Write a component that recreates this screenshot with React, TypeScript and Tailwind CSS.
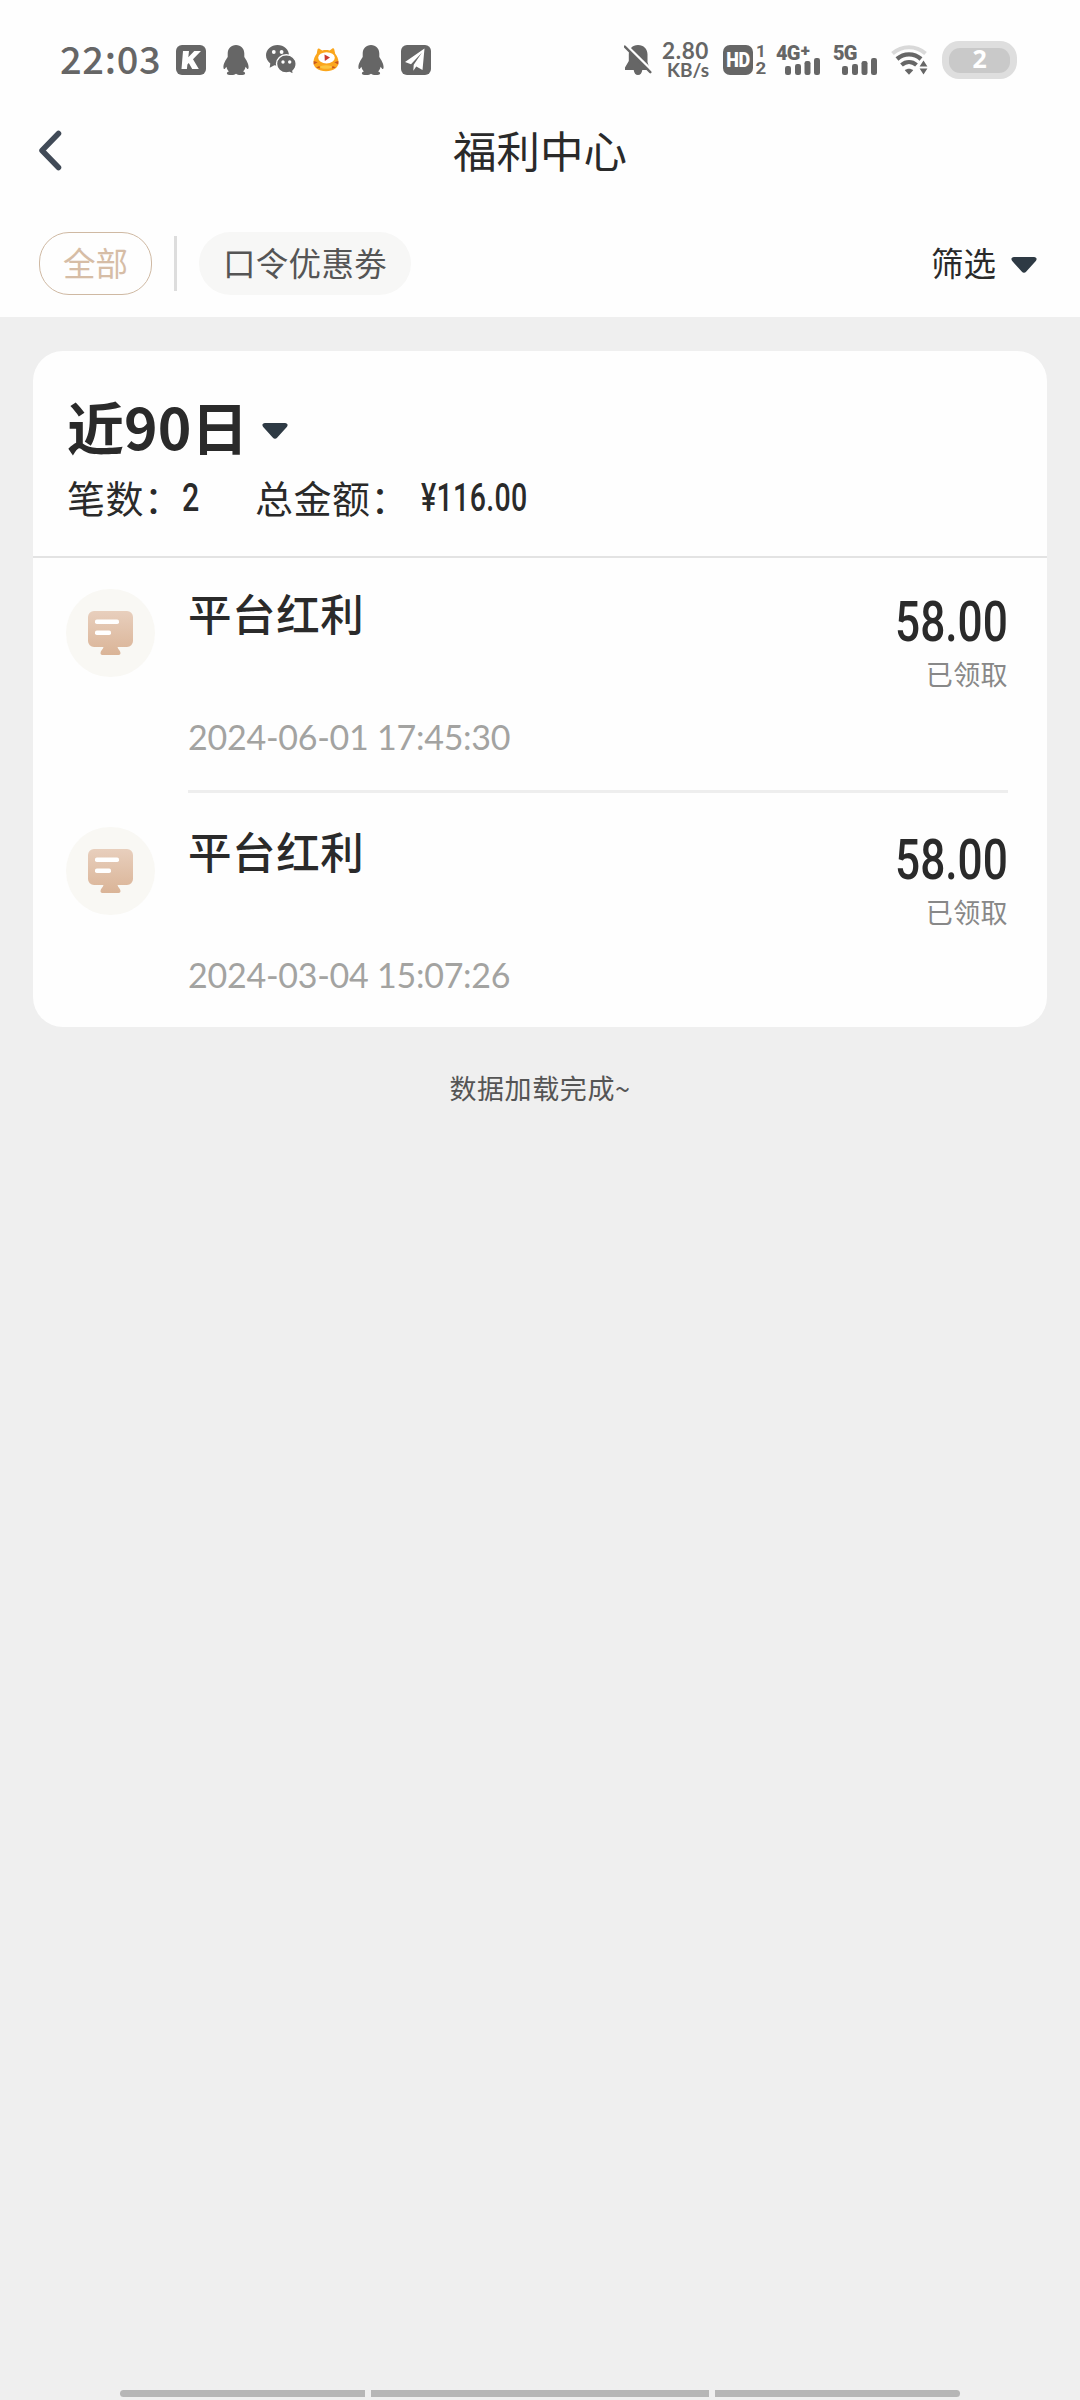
import type { ReactNode } from "react";

const cjk = "font-['Noto_Sans_CJK_SC',sans-serif]";

interface RecordItem {
  id: number;
  title: string;
  time: string;
  amount: string;
  status: string;
}

const records: RecordItem[] = [
  { id: 1, title: "平台红利", time: "2024-06-01 17:45:30", amount: "58.00", status: "已领取" },
  { id: 2, title: "平台红利", time: "2024-03-04 15:07:26", amount: "58.00", status: "已领取" },
];

function Penguin() {
  return (
    <svg width="26" height="30" viewBox="0 0 26 30" fill="#666">
      <path d="M13 0C8 0 4.700 3.600 4.700 8.500v3.500C3 14.500.4 18.500.4 22c0 1.800.7 2.600 1.500 1.700l1.500-2c.5 2 1.300 3.600 2.500 4.900-1.300.4-2 1-2 1.800 0 1.200 2 1.600 4.600 1.600 2 0 3.500-.4 4.500-1.200 1 .8 2.500 1.200 4.500 1.200 2.600 0 4.600-.4 4.600-1.600 0-.8-.7-1.400-2-1.800 1.200-1.300 2-2.900 2.500-4.900l1.500 2c.8.9 1.500.1 1.500-1.700 0-3.500-2.600-7.500-4.300-10V8.500C21.300 3.600 18 0 13 0z" />
    </svg>
  );
}

function WeChat() {
  return (
    <svg width="31" height="31" viewBox="0 0 31 31">
      <path d="M11.500 0C5.200 0 0 4.500 0 10.300c0 3.300 1.700 6.200 4.300 8.100l-.6 4.400 4.700-2.500c1 .3 2 .4 3.100.4C17.900 20.700 23 16.100 23 10.300S17.900 0 11.500 0z" fill="#666" />
      <circle cx="7.800" cy="7" r="1.900" fill="#fff" />
      <circle cx="15.600" cy="7" r="1.900" fill="#fff" />
      <path d="M20.300 9.800c-5.500 0-9.800 4-9.800 9s4.300 9.200 9.800 9.200c1.200 0 2.300-.2 3.400-.5l3.800 2.200-.6-3.700c2.100-1.700 3.300-4.300 3.300-7.200 0-5-4.400-9-9.900-9z" fill="#666" stroke="#fff" strokeWidth="1.400" />
      <circle cx="17" cy="17" r="1.700" fill="#fff" />
      <circle cx="23.700" cy="17" r="1.700" fill="#fff" />
    </svg>
  );
}

function CatPlayer() {
  return (
    <svg width="26" height="24" viewBox="0 0 26 24">
      <path d="M4.500 1.500c.4-1.200 1.200-1.400 2.300-.6l2.400 1.500c2.300-.6 5.100-.6 7.500 0L19 .8c1.200-.8 2-.5 2.300.6l.9 4.300c1.800 2 3.300 4.900 3.300 8.600 0 5.700-5 8.900-12.500 8.900S.5 20 .5 14.300C.5 10.500 2 7.700 3.700 5.700z" fill="#fba61c" />
      <path d="M.7 13l4 1.200-4 2.300zM25.300 13l-4 1.200 4 2.300zM3 19.500l3.500-1.500.5 2.500zM23 19.500L19.500 18l-.5 2.500z" fill="#c8561b" />
      <ellipse cx="13.500" cy="9.800" rx="8.300" ry="5.600" fill="#fff" />
      <ellipse cx="13" cy="19" rx="6" ry="1.800" fill="#fdc53f" />
      <path d="M11.500 6.500l5.500 3-5.200 3.600z" fill="#cb3a31" />
    </svg>
  );
}

function BellOff() {
  return (
    <svg width="28" height="31" viewBox="0 0 28 31">
      <path d="M14 0C8.300 0 4.800 4 4.800 9.500v6.500L1 22.500V25h8.700c.4 3 1.900 5 4.300 5s3.900-2 4.300-5H25v-3l-1.500-5V9.500C23.500 4 19.700 0 14 0z" fill="#666" />
      <path d="M2 0l26 25.500" stroke="#fff" strokeWidth="2.600" />
      <path d="M.8 1.600l25.500 25.600" stroke="#666" strokeWidth="2.400" strokeLinecap="round" />
    </svg>
  );
}

function SignalBars() {
  return (
    <svg width="36" height="17" viewBox="0 0 36 17" fill="#666">
      <rect x="0" y="8" width="6" height="9" rx="2.200" />
      <rect x="10" y="6" width="6" height="11" rx="2.200" />
      <rect x="19.500" y="3" width="6" height="14" rx="2.200" />
      <rect x="29" y="0" width="6" height="17" rx="2.200" />
    </svg>
  );
}

function Signal({ label, plus }: { label: string; plus?: boolean }) {
  return (
    <div className="relative h-[30px] w-[45px]">
      <span className="absolute top-0 left-0 flex font-['Roboto',sans-serif] text-[20px] leading-[16px] font-black tracking-[-0.8px]">
        {label}
        {plus && <span className="-mt-[3px] ml-[1px] text-[17px]">+</span>}
      </span>
      <div className="absolute bottom-0 left-[9px]">
        <SignalBars />
      </div>
    </div>
  );
}

function Wifi() {
  return (
    <svg width="37" height="30" viewBox="0 0 37 30" fill="none">
      <path d="M1.500 8.500c9.500-8.500 23.500-8.500 33 0" stroke="#d9d9d9" strokeWidth="4" />
      <path d="M6 14c7-6.200 17-6.200 24 0" stroke="#666" strokeWidth="4.400" />
      <path d="M10.500 20c4.500-3.800 10.500-3.800 15 0" stroke="#666" strokeWidth="4.200" />
      <path d="M13.800 25.200c2.500-2 5.900-2 8.400 0L18 29.800z" fill="#666" />
      <path d="M32.500 15.500l3.900 6h-7.800zM32.500 29.500l3.900-6h-7.800z" fill="#666" />
    </svg>
  );
}

function StatusBar() {
  return (
    <div className="flex h-[119px] items-start justify-between pt-[41px] pr-[63px] pl-[60px] text-[#666]">
      <div className="flex h-[38px] items-center">
        <span className="-mt-[5px] w-[116px] font-['Noto_Sans_CJK_SC',sans-serif] text-[38px] leading-[38px] font-medium tracking-[0.7px]">
          22:03
        </span>
        <svg width="30" height="30" viewBox="0 0 30 30">
          <rect width="30" height="30" rx="6" fill="#666" />
          <path d="M7 6h6l-.7 6.300L18.300 6H25l-8 8.300L22.800 24h-6.600l-3.400-6-1.400 1.500-.5 4.500H5.500z" fill="#fff" />
        </svg>
        <div className="ml-[17px]"><Penguin /></div>
        <div className="ml-[17px]"><WeChat /></div>
        <div className="ml-[16px]"><CatPlayer /></div>
        <div className="ml-[19px]"><Penguin /></div>
        <svg className="ml-[17px]" width="30" height="30" viewBox="0 0 30 30">
          <rect width="30" height="30" rx="6" fill="#666" />
          <path d="M23.500 3.500L4 17l6 2.200L21 7.500l-8.300 12.200-.4 6 3-4.200 6.200 3.500z" fill="#fff" />
        </svg>
      </div>

      <div className="flex h-[38px] items-center">
        <BellOff />
        <div className="mr-[1px] ml-[9px] flex w-[48px] flex-col items-end font-['Lato',sans-serif] font-bold">
          <span className="text-[22.500px] leading-[20px] tracking-[0.6px]">2.80</span>
          <span className="text-[19px] leading-[18px]">KB/s</span>
        </div>
        <div className="ml-[13px] flex h-[30px] w-[30px] items-center justify-center rounded-[7px] bg-[#666] text-white">
          <span className="scale-y-[1.1] font-['Roboto',sans-serif] text-[18px] leading-none font-black tracking-[-0.5px]">HD</span>
        </div>
        <div className="ml-[2px] flex w-[12px] flex-col items-center font-['Roboto',sans-serif] text-[17px] leading-[17px] font-bold">
          <span>1</span>
          <span className="scale-x-110">2</span>
        </div>
        <div className="ml-[9px]"><Signal label="4G" plus /></div>
        <div className="ml-[12px]"><Signal label="5G" /></div>
        <div className="ml-[13px]"><Wifi /></div>
        <div className="ml-[14px] flex h-[38px] w-[75px] items-center justify-center rounded-[17px] bg-[#dedede]">
          <div className="flex h-[25px] w-[61px] items-center justify-center rounded-[11px] bg-[#c9c9c9] pl-[17px] font-['Noto_Sans',sans-serif] text-[25px] leading-none font-bold text-white">
            <span className="-mt-[3px] w-[31px]">2</span>
          </div>
        </div>
      </div>
    </div>
  );
}

function Caret() {
  return (
    <svg width="26" height="16" viewBox="0 0 26 16" fill="#2e3a44">
      <path d="M3 0h20c2.600 0 3.300 2.300 1.800 3.900l-9.500 10.700c-1.500 1.600-3.100 1.600-4.600 0L1.200 3.900C-.3 2.300.4 0 3 0z" />
    </svg>
  );
}

function Narrow({ children, className }: { children: ReactNode; className: string }) {
  return (
    <span className={`inline-block font-['Roboto',sans-serif] font-medium whitespace-nowrap ${className}`}>
      {children}
    </span>
  );
}

function RecordIcon() {
  return (
    <div className="flex h-[88px] w-[89px] items-center justify-center rounded-full bg-[#f9f8f4]">
      <svg width="45" height="44" viewBox="0 0 45 44">
        <defs>
          <linearGradient id="beige" x1="0" y1="0" x2="0" y2="1">
            <stop offset="0" stopColor="#e8cfbd" />
            <stop offset="1" stopColor="#dab497" />
          </linearGradient>
        </defs>
        <path d="M6 0h33a6 6 0 0 1 6 6v24a6 6 0 0 1-6 6H29.500c.5 2.500 3 3.800 3 6 0 1.300-.6 2-2 2h-16c-1.400 0-2-.7-2-2 0-2.200 2.500-3.500 3-6H6a6 6 0 0 1-6-6V6a6 6 0 0 1 6-6z" fill="url(#beige)" />
        <rect x="7" y="8.500" width="24" height="4.500" rx="1.800" fill="#fff" />
        <rect x="7" y="19.500" width="16" height="4.500" rx="1.800" fill="#fff" />
      </svg>
    </div>
  );
}

function RecordRow({ item, last }: { item: RecordItem; last: boolean }) {
  return (
    <div className={`flex pr-[39px] pl-[33px] ${last ? "pt-[34px]" : "pt-[31px]"}`}>
      <RecordIcon />
      <div className={`ml-[33px] flex flex-1 justify-between ${last ? "h-[200px]" : "h-[204px] border-b-[3px] border-[#eee]"}`}>
        <div className="flex flex-col">
          <h3 className="-mt-[1px] text-[43.500px] leading-[50px] font-medium tracking-[0.6px]">{item.title}</h3>
          <p className="mt-[75px] font-['Lato',sans-serif] text-[34px] leading-[48px] tracking-[-0.25px] text-[#a3a3a1]">
            {item.time}
          </p>
        </div>
        <div className="flex flex-col items-end">
          <Narrow className="origin-right scale-x-[0.79] text-[56px] leading-[67px]">{item.amount}</Narrow>
          <span className="mt-[2px] text-[27px] leading-[32px] tracking-[0.4px] text-[#888]">{item.status}</span>
        </div>
      </div>
    </div>
  );
}

export default function App() {
  return (
    <div className={`flex h-[2400px] w-[1080px] flex-col bg-[#efefef] text-[#2a2a2a] ${cjk}`}>
      <header className="h-[317px] bg-[#fefefe]">
        <StatusBar />
        <div className="grid h-[60px] grid-cols-3 items-center pl-[38px]">
          <svg width="24" height="41" viewBox="0 0 24 41" fill="none">
            <path d="M20.500 3.500L4 20.500l16.500 17" stroke="#414a57" strokeWidth="5.500" strokeLinecap="round" strokeLinejoin="round" />
          </svg>
          <h1 className="-ml-[38px] text-center text-[43.500px] leading-[62px] whitespace-nowrap">福利中心</h1>
        </div>
        <div className="mt-[53px] flex h-[63px] items-center pr-[43px] pl-[39px] text-[32.500px] leading-[57px]">
          <button className="h-[63px] w-[113px] rounded-[30px] border border-[#cfb9a3] pb-[5px] text-[#d6bda6]">全部</button>
          <div className="ml-[22px] h-[55px] w-[3px] bg-[#ddd]" />
          <button className="ml-[22px] h-[63px] w-[212px] rounded-[32px] bg-[#f7f7f6] pb-[5px] tracking-[0.3px] text-[#555]">口令优惠劵</button>
          <button className="ml-auto flex items-center gap-[15px]">
            <span className="-mt-[4px]">筛选</span>
            <span className="mt-[3px]"><Caret /></span>
          </button>
        </div>
      </header>

      <main className="mx-[33px] mt-[34px] h-[676px] rounded-[30px] bg-[#fefefe]">
        <section className="h-[207px] border-b-2 border-[#e3e3e3] pt-[43px] pl-[34px]">
          <div className="flex items-center gap-[14px]">
            <h2 className="text-[57px] leading-[62px] font-bold">近90日</h2>
            <span className="mt-[12px]"><Caret /></span>
          </div>
          <div className="mt-[14px] flex items-center text-[38px] leading-[50px] tracking-[0.5px] whitespace-nowrap">
            <span className="w-[115px] shrink-0">笔数：</span>
            <Narrow className="mt-[3px] w-[73px] origin-left scale-x-[0.8] text-[38px]">2</Narrow>
            <span className="w-[166px] shrink-0">总金额：</span>
            <Narrow className="mt-[3px] origin-left scale-x-[0.75] text-[38px]">¥116.00</Narrow>
          </div>
        </section>
        {records.map((item, index) => (
          <RecordRow key={item.id} item={item} last={index === records.length - 1} />
        ))}
      </main>

      <p className="mt-[41px] text-center text-[27px] leading-[40px] tracking-[0.6px] text-[#555]">数据加载完成~</p>

      <div className="mt-auto mb-[3px] flex justify-center gap-[6px]">
        <div className="h-[7px] w-[245px] rounded-l-full bg-[#b6b6b6]" />
        <div className="h-[7px] w-[338px] bg-[#b6b6b6]" />
        <div className="h-[7px] w-[245px] rounded-r-full bg-[#b6b6b6]" />
      </div>
    </div>
  );
}
